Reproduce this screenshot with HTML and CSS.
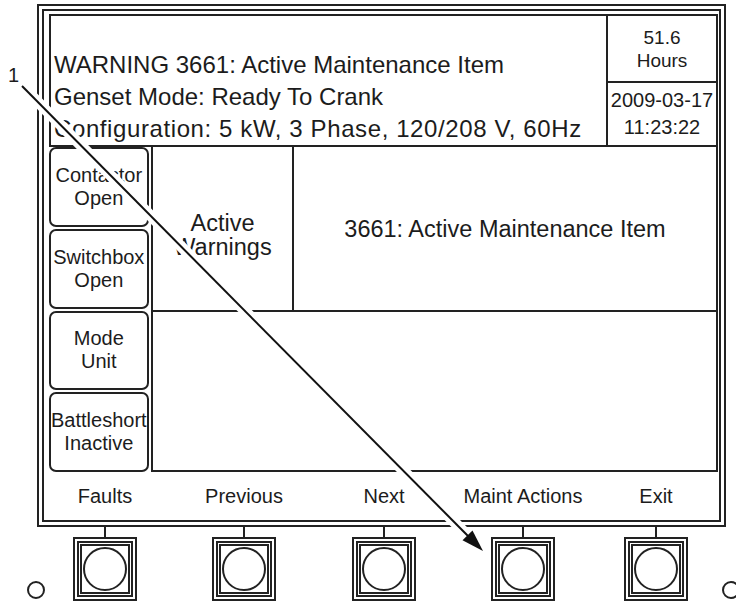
FILE: index.html
```html
<!DOCTYPE html>
<html lang="en">
<head>
    <meta charset="UTF-8">
    <meta name="viewport" content="width=device-width, initial-scale=1.0">
    <title>Genset Display</title>
    <link rel="stylesheet" href="styles.css">
</head>
<body>
    <div class="page">
        <div class="housing">
            <div class="bezel">
                <div class="screen">
                    <div class="header">
                        <div class="status">
                            <p>WARNING 3661: Active Maintenance Item</p>
                            <p>Genset Mode: Ready To Crank</p>
                            <p class="config">Configuration: 5 kW, 3 Phase, 120/208 V, 60Hz</p>
                        </div>
                        <div class="meter">
                            <div class="hours">51.6<br>Hours</div>
                            <div class="clock">2009-03-17<br>11:23:22</div>
                        </div>
                    </div>
                    <div class="body">
                        <ul class="side">
                            <li>Contactor<br>Open</li>
                            <li>Switchbox<br>Open</li>
                            <li>Mode<br>Unit</li>
                            <li>Battleshort<br>Inactive</li>
                        </ul>
                        <div class="panel">
                            <div class="panel-title">Active<br>Warnings</div>
                            <div class="panel-list">3661: Active Maintenance Item</div>
                            <div class="panel-detail"></div>
                        </div>
                    </div>
                    <ul class="labels">
                        <li>Faults</li>
                        <li>Previous</li>
                        <li>Next</li>
                        <li>Maint Actions</li>
                        <li>Exit</li>
                    </ul>
                </div>
            </div>
        </div>
        <div class="keys">
            <span class="led"></span>
            <div class="key"><div class="key-face"><div class="key-ring"><div class="key-cap"></div></div></div></div>
            <div class="key"><div class="key-face"><div class="key-ring"><div class="key-cap"></div></div></div></div>
            <div class="key"><div class="key-face"><div class="key-ring"><div class="key-cap"></div></div></div></div>
            <div class="key"><div class="key-face"><div class="key-ring"><div class="key-cap"></div></div></div></div>
            <div class="key"><div class="key-face"><div class="key-ring"><div class="key-cap"></div></div></div></div>
            <span class="led led-right"></span>
        </div>
        <!-- callout arrow over the drawing -->
        <svg class="callout" width="736" height="603" viewBox="0 0 736 603">
            <line x1="22" y1="86" x2="483" y2="551" stroke="#fff" stroke-width="11"/>
            <line x1="22" y1="86" x2="468" y2="536" stroke="#111" stroke-width="2"/>
            <polygon points="483,551 472.5,530.5 462.5,540.3" fill="#111"/>
            <text x="8" y="82" class="callout-num">1</text>
        </svg>
    </div>
</body>
</html>
```

FILE: styles.css
```css
*{
    margin: 0;
    padding: 0;
    box-sizing: border-box;
    list-style: none;
}
body{
    background: #fff;
    color: #1c1c1c;
    font-family: "Liberation Sans", Arial, sans-serif;
}
.page{
    position: relative;
    width: 736px;
    height: 603px;
    overflow: hidden;
    --cols: 112px 166px 114px 164px 102px;
}
.housing{
    margin: 4px 0 0 37px;
    width: 689px;
    border: 2px solid #222;
    padding: 3px;
}
.bezel{
    border: 2px solid #222;
}
.screen{
    padding: 3px 1px 0 5px;
}
/* top status box */
.header{
    display: flex;
    height: 133px;
    border: 2px solid #222;
}
.status{
    flex: 1;
    display: flex;
    flex-direction: column;
    justify-content: flex-end;
    padding-left: 3px;
    font-size: 24px;
    line-height: 32px;
    white-space: nowrap;
}
.config{
    letter-spacing: 0.6px;
}
.meter{
    width: 110px;
    border-left: 2px solid #222;
    display: flex;
    flex-direction: column;
    text-align: center;
}
.hours{
    height: 67px;
    border-bottom: 2px solid #222;
    display: flex;
    align-items: center;
    justify-content: center;
    font-size: 19px;
    line-height: 23px;
}
.clock{
    flex: 1;
    display: flex;
    align-items: center;
    justify-content: center;
    font-size: 20px;
    line-height: 27px;
}
/* side buttons + panel */
.body{
    display: flex;
    gap: 3px;
    height: 325px;
}
.side{
    width: 99px;
    display: grid;
    grid-template-rows: repeat(4, 1fr);
    gap: 2px;
}
.side li{
    border: 2px solid #222;
    border-radius: 7px;
    display: flex;
    align-items: center;
    justify-content: center;
    text-align: center;
    font-size: 20px;
    line-height: 23px;
    white-space: nowrap;
}
.panel{
    flex: 1;
    border: 2px solid #222;
    border-top: 0;
    display: grid;
    grid-template-columns: 141px 1fr;
    grid-template-rows: 165px 1fr;
    font-size: 23.5px;
    line-height: 24px;
}
.panel-title{
    border-right: 2px solid #222;
    border-bottom: 2px solid #222;
    display: flex;
    align-items: center;
    justify-content: center;
    text-align: center;
    padding-top: 12px;
}
.panel-list{
    border-bottom: 2px solid #222;
    display: flex;
    align-items: center;
    justify-content: center;
    white-space: nowrap;
}
.panel-detail{
    grid-column: 1 / 3;
}
/* soft key labels */
.labels{
    display: grid;
    grid-template-columns: var(--cols);
    height: 48px;
    align-items: center;
    text-align: center;
    font-size: 20px;
    white-space: nowrap;
}
/* hardware keys */
.keys{
    display: grid;
    grid-template-columns: 49px var(--cols) 1fr;
    align-items: start;
}
.key{
    display: flex;
    flex-direction: column;
    align-items: center;
}
.key::before{
    content: "";
    width: 2px;
    height: 10px;
    background: #222;
}
.key-face{
    width: 64px;
    height: 64px;
    border: 2px solid #222;
    padding: 2px;
}
.key-ring{
    height: 100%;
    border: 2px solid #222;
    padding: 1px;
}
.key-cap{
    height: 100%;
    border: 2px solid #222;
    display: flex;
    align-items: center;
    justify-content: center;
}
.key-cap::after{
    content: "";
    width: 40px;
    height: 40px;
    border: 2px solid #222;
    border-radius: 50%;
}
.led{
    align-self: end;
    width: 18px;
    height: 18px;
    border: 2px solid #222;
    border-radius: 50%;
    margin: 0 0 2px 27px;
}
.led-right{
    margin-left: 15px;
}
.callout{
    position: absolute;
    top: 0;
    left: 0;
    pointer-events: none;
}
.callout-num{
    font-family: "Liberation Sans", Arial, sans-serif;
    font-size: 20px;
    fill: #1c1c1c;
}
```
